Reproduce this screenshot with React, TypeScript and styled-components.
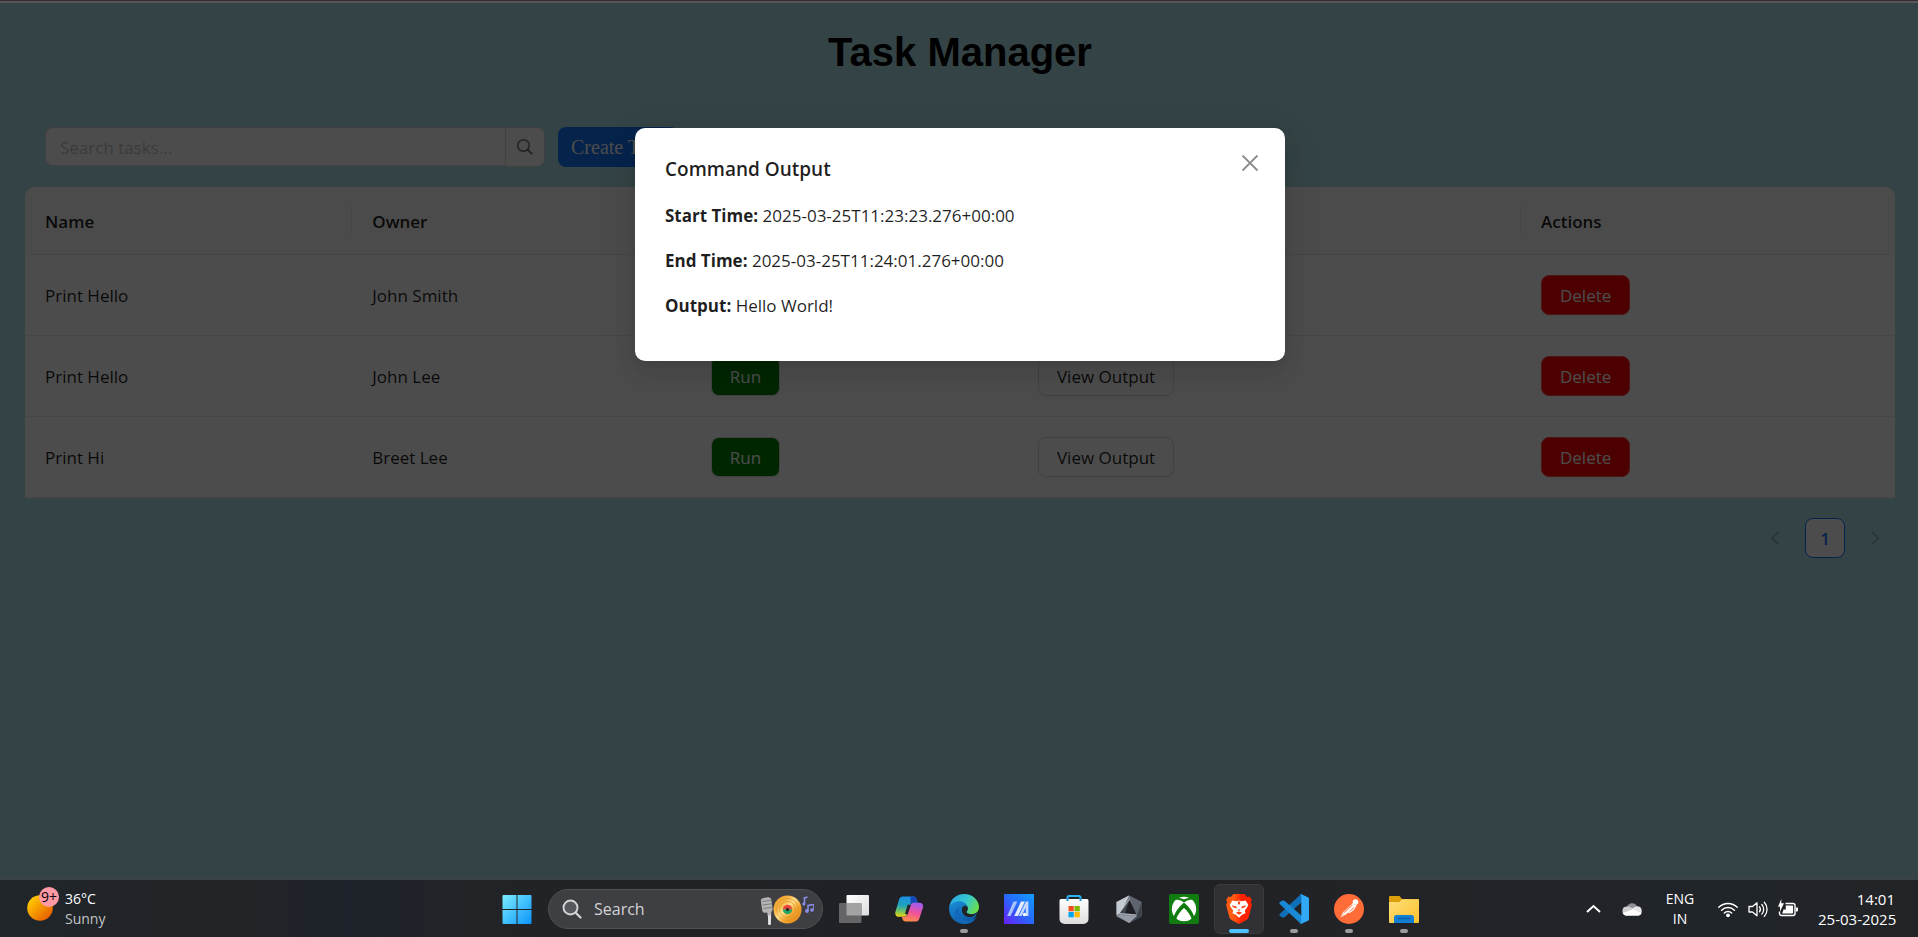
import React from 'react';
import styled, { createGlobalStyle, css } from 'styled-components';

const uiFont = `'Segoe UI', 'Open Sans', 'Noto Sans', sans-serif`;

const GlobalStyle = createGlobalStyle`
  *, *::before, *::after { box-sizing: border-box; }
  body {
    margin: 0;
    background: #202225;
    font-family: ${uiFont};
    color: rgba(0, 0, 0, 0.88);
  }
  button, input { font-family: inherit; margin: 0; }
`;

/* ---------- Page ---------- */

const Screen = styled.div`
  display: flex;
  flex-direction: column;
  min-height: 100vh;
`;

const WindowEdge = styled.div`
  height: 3px;
  border-top: 1px solid #332f32;
  background: #5b5557;
`;

const Viewport = styled.div`
  position: relative;
  flex: 1;
  display: flex;
  flex-direction: column;
  background: powderblue;
`;

const Content = styled.main`
  flex: 1;
  padding: 25px 23px 25px 25px;
`;

const Title = styled.h1`
  margin: 0 0 51px;
  font: bold 40px/48px Arial, 'Liberation Sans', sans-serif;
  color: #000;
  text-align: center;
`;

const Toolbar = styled.div`
  display: flex;
  gap: 13px;
  padding: 0 20px;
  margin-bottom: 20px;
`;

const SearchForm = styled.form`
  display: flex;
  align-items: flex-start;
  width: 500px;
`;

const SearchInput = styled.input`
  flex: 1;
  min-width: 0;
  height: 39px;
  padding: 2px 14px 0;
  border: 1px solid #d9d9d9;
  border-right: 0;
  border-radius: 8px 0 0 8px;
  background: #fff;
  font-size: 17px;
  &::placeholder { color: rgba(0, 0, 0, 0.25); opacity: 1; }
`;

const SearchButton = styled.button`
  display: flex;
  align-items: center;
  justify-content: center;
  width: 40px;
  height: 40px;
  padding: 0;
  border: 1px solid #d9d9d9;
  border-radius: 0 8px 8px 0;
  background: #fff;
  color: rgba(0, 0, 0, 0.5);
`;

const CreateButton = styled.button`
  height: 40px;
  padding: 0 13px;
  border: 0;
  border-radius: 8px;
  background: #1677ff;
  color: #fff;
  font: 20px/24px 'Times New Roman', 'Liberation Serif', serif;
`;

/* ---------- Table ---------- */

const TaskTable = styled.table`
  width: 100%;
  table-layout: fixed;
  border-spacing: 0;
  border-radius: 10px 10px 0 0;
  background: #fff;
  font-size: 17px;
  line-height: 28px;
`;

const HeadCell = styled.th<{ $divider?: boolean }>`
  height: 68px;
  padding: 2px 20px 0;
  border-bottom: 1px solid #ececec;
  background: #fafafa;
  font-weight: 600;
  text-align: left;
  ${({ $divider }) =>
    $divider &&
    css`
      background: linear-gradient(#ececec, #ececec) right center / 1px 28px no-repeat #fafafa;
    `}
  &:first-child { border-top-left-radius: 10px; }
  &:last-child { border-top-right-radius: 10px; }
`;

const Cell = styled.td`
  height: 81px;
  padding: 0 20px;
  border-bottom: 1px solid #ececec;
`;

const TextCell = styled(Cell)`
  padding-top: 2px;
`;

const variants = {
  run: css`
    background: #008000;
    color: #fff;
  `,
  view: css`
    background: #fff;
    color: rgba(0, 0, 0, 0.88);
  `,
  delete: css`
    background: #ff0000;
    border-color: #ff4d4f;
    color: #fff;
  `,
};

const ActionButton = styled.button<{ $variant: keyof typeof variants }>`
  display: block;
  height: 40px;
  padding: 2px 18px 0;
  border: 1px solid #d9d9d9;
  border-radius: 8px;
  box-shadow: 0 2px 0 rgba(0, 0, 0, 0.02);
  font-size: 17px;
  line-height: 28px;
  ${({ $variant }) => variants[$variant]}
`;

const Pagination = styled.nav`
  display: flex;
  justify-content: flex-end;
  gap: 10px;
  margin-top: 20px;
`;

const PageButton = styled.button<{ $active?: boolean }>`
  display: flex;
  align-items: center;
  justify-content: center;
  width: 40px;
  height: 40px;
  padding: 0;
  border: 1px solid ${({ $active }) => ($active ? '#1677ff' : 'transparent')};
  border-radius: 8px;
  background: ${({ $active }) => ($active ? '#fff' : 'transparent')};
  color: ${({ $active }) => ($active ? '#1677ff' : 'rgba(0, 0, 0, 0.25)')};
  font-size: 17px;
  font-weight: 600;
`;

/* ---------- Modal ---------- */

const Overlay = styled.div`
  position: absolute;
  inset: 0;
  display: flex;
  justify-content: center;
  align-items: flex-start;
  padding: 125px 0 0 2px;
  background: rgba(0, 0, 0, 0.7);
`;

const Dialog = styled.section`
  position: relative;
  width: 650px;
  padding: 26px 30px 42px;
  border-radius: 10px;
  background: #fff;
  box-shadow: 0 8px 20px rgba(0, 0, 0, 0.08), 0 4px 8px -5px rgba(0, 0, 0, 0.12),
    0 12px 36px 10px rgba(0, 0, 0, 0.05);
  h2 {
    margin: 0 0 18px;
    font-size: 19px;
    line-height: 30px;
    font-weight: 600;
  }
  p {
    margin: 0 0 18px;
    font-size: 17px;
    line-height: 27px;
  }
  p:last-child { margin-bottom: 0; }
`;

const CloseButton = styled.button`
  position: absolute;
  top: 15px;
  right: 15px;
  display: flex;
  align-items: center;
  justify-content: center;
  width: 40px;
  height: 40px;
  padding: 0;
  border: 0;
  background: none;
  color: rgba(0, 0, 0, 0.45);
`;

/* ---------- Taskbar ---------- */

const Taskbar = styled.footer`
  display: grid;
  grid-template-columns: 1fr auto 1fr;
  align-items: start;
  height: 58px;
  padding: 4px 0 0 3px;
  border-top: 1px solid #3d4347;
  background: linear-gradient(90deg, #20262a 0, #222326 12%, #1e232b 18%, #222326 26%, #202126 52%, #222326 70%, #20252a 90%, #222326 100%);
  color: #fff;
`;

const Weather = styled.button`
  display: flex;
  align-items: center;
  gap: 6px;
  height: 50px;
  padding: 0 0 0 23px;
  border: 0;
  background: none;
  color: #fff;
  font-size: 14px;
  line-height: 20px;
  text-align: left;
  span { display: block; }
  span + span { color: #c2c4c6; }
`;

const WeatherIcon = styled.div`
  position: relative;
  width: 33px;
  height: 40px;
  padding: 6px 1px;
  svg { display: block; }
`;

const Badge = styled.b`
  position: absolute;
  top: -2px;
  right: 0;
  width: 20px;
  height: 20px;
  border-radius: 10px;
  background: #ff99a4;
  color: #000;
  font-size: 14px;
  font-weight: 400;
  line-height: 20px;
  text-align: center;
`;

const Apps = styled.div`
  display: flex;
  gap: 5px;
`;

const AppButton = styled.button<{ $active?: boolean; $running?: boolean }>`
  display: flex;
  flex-direction: column;
  align-items: center;
  width: 50px;
  height: 50px;
  padding: 10px 0 0;
  border: 1px solid ${({ $active }) => ($active ? '#3a3a3f' : 'transparent')};
  border-radius: 6px;
  background: ${({ $active }) => ($active ? '#303035' : 'none')};
  svg { flex: none; margin-top: -1px; }
  &::after {
    content: '';
    width: ${({ $active }) => ($active ? 20 : 8)}px;
    height: 4px;
    margin-top: 5px;
    border-radius: 2px;
    background: ${({ $active, $running }) => ($active ? '#4cc2ff' : $running ? '#9b9b9d' : 'transparent')};
  }
`;

const TaskSearch = styled.label`
  display: flex;
  align-items: center;
  width: 275px;
  height: 40px;
  margin: 5px 1px 0;
  padding: 0 8px 0 13px;
  border: 1px solid #4f5054;
  border-radius: 20px;
  background: #3e3f43;
  svg { flex: none; }
  input {
    flex: 1;
    min-width: 0;
    padding: 0 0 0 12px;
    border: 0;
    background: none;
    color: #d2d2d3;
    font-size: 16px;
  }
  input::placeholder { color: #d2d2d3; opacity: 1; }
`;

const Tray = styled.div`
  display: flex;
  justify-content: flex-end;
  align-items: center;
  gap: 20px;
  height: 50px;
  padding-right: 23px;
`;

const TrayButton = styled.button<{ $width: number }>`
  display: flex;
  align-items: center;
  justify-content: space-between;
  width: ${({ $width }) => $width}px;
  height: 40px;
  padding: 0;
  border: 0;
  background: none;
  color: #fff;
`;

const TrayText = styled.button<{ $align: 'center' | 'right'; $size: number; $width: number }>`
  width: ${({ $width }) => $width}px;
  padding: 0;
  border: 0;
  background: none;
  color: #fff;
  font-size: ${({ $size }) => $size}px;
  line-height: 20px;
  text-align: ${({ $align }) => $align};
  white-space: nowrap;
  span { display: block; }
`;

/* ---------- Icons ---------- */

const Icon = ({ size = 30, children }: { size?: number; children: React.ReactNode }) => (
  <svg width={size} height={size} viewBox={`0 0 ${size} ${size}`} fill="none" aria-hidden="true">
    {children}
  </svg>
);

const SunIcon = () => (
  <svg width="26" height="26" viewBox="0 0 26 26" aria-hidden="true">
    <defs>
      <linearGradient id="sun" x1="0" y1="0" x2="1" y2="1">
        <stop offset="0.1" stopColor="#ffd000" />
        <stop offset="0.9" stopColor="#e85a00" />
      </linearGradient>
    </defs>
    <circle cx="13" cy="13" r="12.8" fill="url(#sun)" />
  </svg>
);

const StartIcon = () => (
  <Icon>
    <defs>
      <linearGradient id="win" gradientUnits="userSpaceOnUse" x1="0" y1="0" x2="30" y2="30">
        <stop offset="0" stopColor="#7df0ff" />
        <stop offset="1" stopColor="#0a93fb" />
      </linearGradient>
    </defs>
    <path fill="url(#win)" d="M1.500 1H14.500V15H.5V2a1 1 0 0 1 1-1zM15.500 1H28.500a1 1 0 0 1 1 1V15h-14zM.5 16h14V30h-13a1 1 0 0 1-1-1zM15.500 16h14V29a1 1 0 0 1-1 1h-13z" />
  </Icon>
);

const TaskViewIcon = () => (
  <Icon>
    <defs>
      <linearGradient id="tv" x1="0" y1="0" x2="1" y2="1">
        <stop offset="0" stopColor="#fff" />
        <stop offset="1" stopColor="#dcdcdc" />
      </linearGradient>
    </defs>
    <rect x="7.500" y="1" width="22.500" height="20.500" rx="1" fill="url(#tv)" />
    <rect x="0" y="9" width="22.500" height="20" rx="1" fill="#656567" />
    <path d="M7.500 9h15v12.500h-15z" fill="#a2a2a3" />
  </Icon>
);

const CopilotIcon = () => (
  <Icon>
    <defs>
      <linearGradient id="cpA" x1="0.300" y1="0" x2="0.200" y2="1">
        <stop offset="0" stopColor="#1c8fe6" />
        <stop offset="0.450" stopColor="#1fa5b8" />
        <stop offset="0.750" stopColor="#7cc45c" />
        <stop offset="1" stopColor="#f2d311" />
      </linearGradient>
      <linearGradient id="cpB" x1="0.600" y1="0" x2="0.300" y2="1">
        <stop offset="0" stopColor="#a05df0" />
        <stop offset="0.500" stopColor="#f0529a" />
        <stop offset="1" stopColor="#ff8f45" />
      </linearGradient>
    </defs>
    <path d="M9 2.500h10.500c2 0 2.700 1.300 3.200 3l.9 3.200h-4.100c-2 0-2.800.9-3.400 2.600l-3.100 9.200c-.6 1.500-1.400 2.200-3 2.200H5c-3 0-4.300-2.400-3.500-5.300L5 5.700c.7-2 2-3.200 4-3.200z" fill="url(#cpA)" />
    <path d="M16.500 2.500h3c2 0 2.700 1.300 3.200 3l.9 3.200h-4c-1.600 0-2.500.6-3.100 1.800z" fill="#1747b8" />
    <path d="M20 8.700h5.500c3 0 4.200 2.300 3.400 5.100l-3.500 10.600c-.8 2.200-2.200 3.100-4.200 3.100H11.800c-2 0-2.900-1-3.300-2.500l-.8-2.300H10c1.700 0 2.500-.7 3.100-2.300l3.400-9.200c.6-1.600 1.700-2.500 3.500-2.500z" fill="url(#cpB)" />
    <path d="M13.800 10.500 11 19.500l2.500 1.500 3.300-9.800z" fill="#252329" />
  </Icon>
);

const EdgeIcon = () => (
  <Icon>
    <defs>
      <linearGradient id="edA" x1="0" y1="0.200" x2="1" y2="0.600">
        <stop offset="0" stopColor="#2aa5e0" />
        <stop offset="0.550" stopColor="#35c8cf" />
        <stop offset="1" stopColor="#6ade4c" />
      </linearGradient>
      <linearGradient id="edB" x1="0" y1="0" x2="0.600" y2="1">
        <stop offset="0" stopColor="#1b8fdc" />
        <stop offset="1" stopColor="#0c59a4" />
      </linearGradient>
    </defs>
    <path d="M.2 13.500C1 5.800 7.200 0 15 0c8.700 0 15 6.300 15 13 0 4.500-3.300 7.200-7.300 7.200-3.600 0-5.500-1.300-5.200-2.500.3-.9 1.300-1.500 1.300-3.200 0-3-3-5.500-7.100-5.500C6.500 9 2 10.500.2 13.500z" fill="url(#edA)" />
    <path d="M.2 13.500C1.600 9.500 6 7.300 10.500 7.300c4.300 0 8.300 3.200 8.300 7.200 0 1.700-1 2.300-1.300 3.200-.3 1.200 1.600 2.500 5.200 2.500 2 0 3.800-.6 5.100-1.700C26.500 25.500 21.500 30 15 30 6.500 30 .1 23 .1 15z" fill="url(#edB)" />
    <path d="M10.800 13.300c-2.600 5.500.8 12.600 7.400 13.800 3.400.5 7.200-1.200 9.600-4C25.500 27.600 20.800 30 15 30 9.500 29.400 5.500 25 5.800 19.800c.1-3 2-5.600 5-6.500z" fill="#1468b9" />
    <path d="M14.200 12.300c2-1.200 4.600.1 4.600 2.200 0 1.700-1 2.300-1.300 3.200-.3 1.200 1.600 2.500 5.200 2.500 1.800 0 3.300-.4 4.800-1.300-2 3.600-5.900 4.700-9.300 3.900-4.900-1.200-6.900-7.500-4-10.500z" fill="#222327" />
  </Icon>
);

const MyAsusIcon = () => (
  <Icon>
    <defs>
      <linearGradient id="my" x1="1" y1="0" x2="0" y2="1">
        <stop offset="0" stopColor="#129cff" />
        <stop offset="0.500" stopColor="#2868fa" />
        <stop offset="1" stopColor="#6a1df5" />
      </linearGradient>
    </defs>
    <rect width="30" height="30" fill="url(#my)" />
    <path d="M9.500 7.500h3.800L6.500 22H3.200z" fill="#a9c1fd" />
    <path d="M17 7.500h4L14 22h-3.800z" fill="#e4ebff" />
    <path d="M22 7.500h2.400V22h-2.600v-8.500L17.500 22h-2.700z" fill="#c7d6fe" />
    <circle cx="20.500" cy="20.500" r="1.700" fill="#fff" />
  </Icon>
);

const StoreIcon = () => (
  <Icon>
    <defs>
      <linearGradient id="st" x1="0" y1="0" x2="0" y2="1">
        <stop offset="0" stopColor="#fff" />
        <stop offset="1" stopColor="#dcdcdc" />
      </linearGradient>
    </defs>
    <path d="M.5 6.500a1.500 1.500 0 0 1 1.500-1.500h26a1.500 1.500 0 0 1 1.500 1.500V25a5 5 0 0 1-5 5h-19a5 5 0 0 1-5-5z" fill="url(#st)" />
    <path d="M8.500 5V3.500c0-.9.500-1.500 1.300-1.500h10.400c.8 0 1.300.6 1.300 1.500V5" stroke="#2db4f3" strokeWidth="2" />
    <path d="M8.500 4v3M21.500 4v3" stroke="#1b8fd6" strokeWidth="2" />
    <path d="M9.500 12h5.300v5.300H9.500z" fill="#f25022" />
    <path d="M15.500 12h5.300v5.300h-5.300z" fill="#7fba00" />
    <path d="M9.500 18h5.300v5.300H9.500z" fill="#00a4ef" />
    <path d="M15.500 18h5.300v5.300h-5.300z" fill="#ffb900" />
  </Icon>
);

const CrateIcon = () => (
  <Icon>
    <path d="M15 1.500 27.500 8v14.500L15 29 2.500 22.500V8z" fill="#79808a" />
    <path d="M15 1.500 2.500 8v13l5-3z" fill="#c3cad1" />
    <path d="M15 1.500 27.500 8l-5 14z" fill="#5d646e" />
    <path d="M27.500 8v14.500L15 29l7.500-7z" fill="#3e434b" />
    <path d="M2.500 21 15 29l8-7z" fill="#959ca6" />
    <path d="M15.500 5.500 22.500 20.500 6 19z" fill="#1d1f24" />
    <path d="M15.500 5.500 6 18.500l5 1z" fill="#40464e" />
    <path d="M15.500 5.500 5 19.500l17.500 1.500" stroke="#c4c9ce" strokeWidth="0.800" />
  </Icon>
);

const XboxIcon = () => (
  <Icon>
    <rect width="30" height="30" rx="2" fill="#107c10" />
    <circle cx="15" cy="15" r="12.200" fill="#fff" />
    <path d="M6.300 6.200C9 5 12.500 6.800 15 8.600c2.500-1.800 6-3.600 8.700-2.400l-1.500-1.600C19.900 3.400 17 4.500 15 5.600c-2-1.100-4.900-2.200-7.200-1z" fill="#107c10" />
    <path d="M15 8.400c4 3.200 10 10.500 10.300 15.400l-2.300 2C22 21.500 18 16.500 15 13.900c-3 2.600-7 7.600-8 11.900l-2.300-2C5 18.900 11 11.600 15 8.400z" fill="#107c10" />
  </Icon>
);

const BraveIcon = () => (
  <Icon>
    <defs>
      <linearGradient id="br" x1="0" y1="0" x2="1" y2="0">
        <stop offset="0.300" stopColor="#ff5b12" />
        <stop offset="0.600" stopColor="#ff2200" />
      </linearGradient>
    </defs>
    <path d="M9.500 0h11l2.600 2.900 2.500-.4 2.200 3.300-.9 2.500 1 2.600-3.200 12.200c-.4 1.400-1 2.100-2.200 3L15 30l-7.500-3.900c-1.200-.9-1.800-1.600-2.200-3L2.100 10.900l1-2.600-.9-2.500 2.200-3.300 2.500.4z" fill="url(#br)" />
    <path d="M8.500 6.500l3.700.7L15 6.500l2.800.7 3.700-.7 2.700 4-.8 2.500-2.600 3.600.7 2.600-3.400 1.600L15 23.800l-3.100-3L8.500 19.200l.7-2.600L6.600 13l-.8-2.500z" fill="#fff" />
    <path d="M8 11.300l4.500 1.200v2L8.700 13zM22 11.300l-4.500 1.200v2l3.800-1.500zM13.700 7.500h2.600l-.6 3h-1.400zM13.300 15.500h3.400L15 17zM11.800 18.800l3.200-1.200 3.200 1.200L15 20.800z" fill="#ff3f0c" />
  </Icon>
);

const CodeIcon = () => (
  <Icon>
    <path d="M22.300.3 29 3.300c.6.300 1 .8 1 1.500V9L22.300 8.500 5.500 23.300 3.700 23.800 1 22c-.8-.7-.8-1.600 0-2.300L21 1z" fill="#0f6fb8" />
    <path d="M22.300 29.700 29 26.700c.6-.3 1-.8 1-1.500V21l-7.700.5L5.500 6.700 3.500 6.500 1 8c-.8.700-.8 1.600 0 2.300L21 29z" fill="#1b8ad6" />
    <path d="M22.300.2 29 3.400c.6.300 1 .8 1 1.500v20.200c0 .7-.4 1.200-1 1.500l-6.700 3.200c-.6.300-1.200.2-1.700-.4.9.5 1.700-.1 1.700-1V1.700C22.300.6 21.500.2 20.600.6c.5-.5 1.100-.7 1.700-.4z" fill="#32a9f4" />
  </Icon>
);

const PostmanIcon = () => (
  <Icon>
    <circle cx="15" cy="15" r="15" fill="#ff6c37" />
    <circle cx="21.500" cy="8" r="2.800" fill="#fff" />
    <path d="M18.500 9.500 9 18l-2.500 5.500 5.500-3 8.500-8.500z" fill="#ffdccf" />
    <path d="M20 12 10.500 20.500M18.500 9.500l3 3.500M22.500 10.500l-3 5-5 3.500" stroke="#fff" strokeWidth="1.200" />
    <path d="M17.500 11.500 10 18.500" stroke="#ff8a60" strokeWidth="1" />
  </Icon>
);

const FolderIcon = () => (
  <Icon>
    <defs>
      <linearGradient id="fo" x1="0" y1="0" x2="1" y2="1">
        <stop offset="0" stopColor="#ffe07a" />
        <stop offset="1" stopColor="#fbbf2d" />
      </linearGradient>
    </defs>
    <path d="M0 3a1 1 0 0 1 1-1h9.500L13 5h16a1 1 0 0 1 1 1v6H0z" fill="#dd9e0c" />
    <path d="M0 8h10.500L13 5.200h16a1 1 0 0 1 1 1V28a1 1 0 0 1-1 1H1a1 1 0 0 1-1-1z" fill="url(#fo)" />
    <path d="M5 29v-5.500a2.500 2.500 0 0 1 2.500-2.500h15a2.500 2.500 0 0 1 2.500 2.500V29z" fill="#1180d4" />
    <path d="M9 24.500h12" stroke="#075fa8" strokeWidth="1.500" strokeLinecap="round" />
  </Icon>
);

const DiscoArt = () => (
  <svg width="54" height="36" viewBox="0 0 54 36" fill="none" aria-hidden="true">
    <defs>
      <linearGradient id="disc" x1="0" y1="0" x2="1" y2="1">
        <stop offset="0" stopColor="#ee9a22" />
        <stop offset="0.300" stopColor="#f6b443" />
        <stop offset="0.450" stopColor="#ffdf8c" />
        <stop offset="0.650" stopColor="#f3a52f" />
        <stop offset="1" stopColor="#dd7f15" />
      </linearGradient>
    </defs>
    <path d="M6.500 17h5l-.7 16H9z" fill="#b5b5b5" />
    <rect x="8" y="24" width="3" height="10" rx="1.200" fill="#dedede" />
    <rect x="1.500" y="6.500" width="10.500" height="15" rx="3" transform="rotate(-8 7 14)" fill="#b4b4b4" />
    <path d="M2 10.500l10-1.300M2.500 14l10-1.300M3.300 17.500l9.500-1.300" stroke="#707072" strokeWidth="0.800" />
    <circle cx="27.500" cy="18.500" r="14" fill="url(#disc)" />
    <circle cx="27.500" cy="18.500" r="11" stroke="#d98d20" strokeWidth="0.600" />
    <circle cx="27.500" cy="18.500" r="8" stroke="#d98d20" strokeWidth="0.600" />
    <path d="M22.800 18.500a4.700 4.700 0 0 1 9.400 0z" fill="#e8453c" />
    <path d="M22.800 18.500a4.700 4.700 0 0 0 9.400 0z" fill="#22a565" />
    <circle cx="27.500" cy="18.500" r="1.600" fill="#26221f" />
    <path d="M43.500 7.200l4-1.200M44.500 7v6M48 19.500v-5l6-1v5" stroke="#8f8df0" strokeWidth="1.500" />
    <circle cx="43.800" cy="13" r="1.500" fill="#8f8df0" />
    <circle cx="47" cy="20" r="1.900" fill="#8f8df0" />
    <circle cx="52" cy="19" r="1.800" fill="#8f8df0" />
  </svg>
);

const apps = [
  { name: 'Task View', icon: <TaskViewIcon /> },
  { name: 'Copilot', icon: <CopilotIcon /> },
  { name: 'Microsoft Edge', icon: <EdgeIcon />, running: true },
  { name: 'MyASUS', icon: <MyAsusIcon /> },
  { name: 'Microsoft Store', icon: <StoreIcon /> },
  { name: 'Armoury Crate', icon: <CrateIcon /> },
  { name: 'Xbox', icon: <XboxIcon /> },
  { name: 'Brave', icon: <BraveIcon />, active: true },
  { name: 'Visual Studio Code', icon: <CodeIcon />, running: true },
  { name: 'Postman', icon: <PostmanIcon />, running: true },
  { name: 'File Explorer', icon: <FolderIcon />, running: true },
];

const tasks = [
  { name: 'Print Hello', owner: 'John Smith' },
  { name: 'Print Hello', owner: 'John Lee' },
  { name: 'Print Hi', owner: 'Breet Lee' },
];

const output = [
  ['Start Time:', '2025-03-25T11:23:23.276+00:00'],
  ['End Time:', '2025-03-25T11:24:01.276+00:00'],
  ['Output:', 'Hello World!'],
];

export default function App() {
  return (
    <Screen>
      <GlobalStyle />
      <WindowEdge />
      <Viewport>
        <Content>
          <Title>Task Manager</Title>
          <Toolbar>
            <SearchForm onSubmit={(e) => e.preventDefault()}>
              <SearchInput type="text" placeholder="Search tasks..." aria-label="Search tasks" />
              <SearchButton type="submit" aria-label="Search">
                <Icon size={18}>
                  <circle cx="7.500" cy="7.500" r="5.700" stroke="currentColor" strokeWidth="1.700" />
                  <path d="M11.500 11.500 16.300 16.300" stroke="currentColor" strokeWidth="2" />
                </Icon>
              </SearchButton>
            </SearchForm>
            <CreateButton type="button">Create Task</CreateButton>
          </Toolbar>
          <TaskTable>
            <colgroup>
              <col width="17.5%" />
              <col width="18.1%" />
              <col width="17.5%" />
              <col width="26.9%" />
              <col width="20%" />
            </colgroup>
            <thead>
              <tr>
                <HeadCell $divider>Name</HeadCell>
                <HeadCell $divider>Owner</HeadCell>
                <HeadCell $divider />
                <HeadCell $divider />
                <HeadCell>Actions</HeadCell>
              </tr>
            </thead>
            <tbody>
              {tasks.map((task) => (
                <tr key={task.owner}>
                  <TextCell>{task.name}</TextCell>
                  <TextCell>{task.owner}</TextCell>
                  <Cell><ActionButton type="button" $variant="run">Run</ActionButton></Cell>
                  <Cell><ActionButton type="button" $variant="view">View Output</ActionButton></Cell>
                  <Cell><ActionButton type="button" $variant="delete">Delete</ActionButton></Cell>
                </tr>
              ))}
            </tbody>
          </TaskTable>
          <Pagination aria-label="Pages">
            <PageButton type="button" aria-label="Previous page">
              <Icon size={16}><path d="M11.500 2 5 8l6.500 6" stroke="currentColor" strokeWidth="1.500" /></Icon>
            </PageButton>
            <PageButton type="button" $active>1</PageButton>
            <PageButton type="button" aria-label="Next page">
              <Icon size={16}><path d="M5 2 11.500 8 5 14" stroke="currentColor" strokeWidth="1.500" /></Icon>
            </PageButton>
          </Pagination>
        </Content>
        <Overlay>
          <Dialog role="dialog" aria-labelledby="output-title">
            <CloseButton type="button" aria-label="Close">
              <Icon size={18}>
                <path d="M1.500 1.500l15 15M16.500 1.500l-15 15" stroke="currentColor" strokeWidth="1.800" />
              </Icon>
            </CloseButton>
            <h2 id="output-title">Command Output</h2>
            {output.map(([label, value]) => (
              <p key={label}><strong>{label}</strong> {value}</p>
            ))}
          </Dialog>
        </Overlay>
      </Viewport>
      <Taskbar>
        <Weather type="button">
          <WeatherIcon>
            <SunIcon />
            <Badge>9+</Badge>
          </WeatherIcon>
          <div>
            <span>36°C</span>
            <span>Sunny</span>
          </div>
        </Weather>
        <Apps>
          <AppButton type="button" aria-label="Start"><StartIcon /></AppButton>
          <TaskSearch>
            <Icon size={20}>
              <circle cx="8.500" cy="8.500" r="7" fill="#57585d" stroke="#d6d6d8" strokeWidth="1.900" />
              <path d="M13.700 13.700 18.500 18.500" stroke="#d6d6d8" strokeWidth="2.200" strokeLinecap="round" />
            </Icon>
            <input type="text" placeholder="Search" aria-label="Search Windows" />
            <DiscoArt />
          </TaskSearch>
          {apps.map((app) => (
            <AppButton key={app.name} type="button" aria-label={app.name} $active={app.active} $running={app.running}>
              {app.icon}
            </AppButton>
          ))}
        </Apps>
        <Tray>
          <TrayButton type="button" aria-label="Show hidden icons" $width={16}>
            <Icon size={16}><path d="M1 11 7.500 5l6.500 6" stroke="currentColor" strokeWidth="2" /></Icon>
          </TrayButton>
          <TrayButton type="button" aria-label="OneDrive" $width={20}>
            <Icon size={20}>
              <path d="M5 7.500a5.500 5.500 0 0 1 10-.3L12 13 3 12z" fill="#8f9092" />
              <path d="M4.800 7.600C8 7 11 10 16 12L4 16.500a4.500 4.500 0 0 1 .8-8.900z" fill="#cfcfd0" />
              <path d="M15 7.200a4.700 4.700 0 0 1 1 9.300L9 11.500c2-2.500 3.500-4 6-4.300z" fill="#e6e6e6" />
              <path d="M1 14l9.500-3.500L19.500 14c-.6 1.700-2 2.700-3.700 2.700H4.500C3 16.700 1.600 15.700 1 14z" fill="#fff" />
            </Icon>
          </TrayButton>
          <TrayText type="button" $align="center" $size={14} $width={36}>
            <span>ENG</span>
            <span>IN</span>
          </TrayText>
          <TrayButton type="button" aria-label="Network, volume and battery" $width={80}>
            <Icon size={20}>
              <path d="M.8 8.200a13 13 0 0 1 18.400 0M3.600 11.200a9 9 0 0 1 12.800 0M6.400 14a5.100 5.100 0 0 1 7.200 0" stroke="currentColor" strokeWidth="1.500" strokeLinecap="round" />
              <circle cx="10" cy="16.300" r="1.900" fill="currentColor" />
            </Icon>
            <Icon size={20}>
              <path d="M1 7.500h3.500L9 3.800v13L4.500 13H1z" stroke="currentColor" strokeWidth="1.300" strokeLinejoin="round" />
              <path d="M11.500 7.800a4 4 0 0 1 0 5M13.800 5.500a7 7 0 0 1 0 9.600M16.300 3.200a10.500 10.500 0 0 1 0 14.200" stroke="currentColor" strokeWidth="1.300" strokeLinecap="round" />
            </Icon>
            <Icon size={20}>
              <path d="M7.500 4.500H15a2 2 0 0 1 2 2v8a2 2 0 0 1-2 2H3.500a2 2 0 0 1-2-2v-2" stroke="currentColor" strokeWidth="1.400" />
              <path d="M7.800 6.500H14.300a.8.800 0 0 1 .8.800v6.400a.8.800 0 0 1-.8.800H4.200l1.300-4H7.800zM18 8.500h1.200a.8.800 0 0 1 .8.800v2.400a.8.800 0 0 1-.8.800H18z" fill="currentColor" />
              <path d="M3.300 0v4.200H6L2 12.500V7.700H0z" fill="currentColor" />
            </Icon>
          </TrayButton>
          <TrayText type="button" $align="right" $size={15} $width={77}>
            <span>14:01</span>
            <span>25-03-2025</span>
          </TrayText>
        </Tray>
      </Taskbar>
    </Screen>
  );
}
